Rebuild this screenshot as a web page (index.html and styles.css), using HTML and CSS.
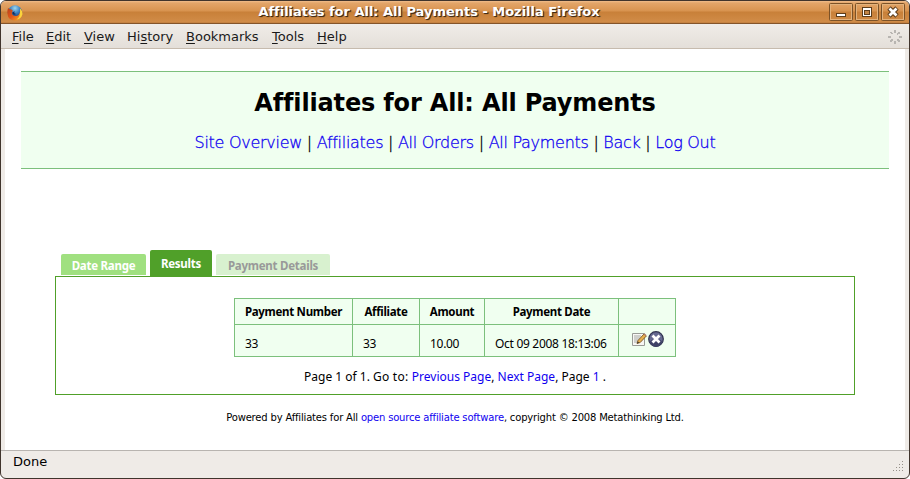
FILE: index.html
```html
<!DOCTYPE html>
<html lang="en">
<head>
<meta charset="utf-8">
<title>Affiliates for All: All Payments</title>
<link rel="stylesheet" href="styles.css">
</head>
<body>
<div class="window">
  <header class="titlebar">
    <svg class="firefox" width="16" height="16" viewBox="0 0 16 16">
      <defs>
        <radialGradient id="globe" cx=".5" cy=".2" r=".7"><stop offset="0" stop-color="#9fd8ef"/><stop offset=".5" stop-color="#3a7fc0"/><stop offset="1" stop-color="#152c60"/></radialGradient>
        <linearGradient id="fox" x1="0" y1="0" x2="1" y2="1"><stop offset="0" stop-color="#b9401a"/><stop offset=".5" stop-color="#e2581a"/><stop offset="1" stop-color="#f6b52a"/></linearGradient>
      </defs>
      <circle cx="8" cy="7.5" r="7.2" fill="url(#globe)"/>
      <path d="M1 3 L2.4 4 L4.500 4.500 L6 6 L5 7 Q4.500 10.500 8 11 Q12 11.500 13 7 L13 4 Q15.800 6 15 10 Q13.500 15.500 8 15.500 Q1 15 .5 9 Q.2 5 1 3Z" fill="url(#fox)"/>
      <path d="M13 3.500 Q15.900 6 15.400 9.500 Q14 14 9.500 14.600 Q13.800 12 13 3.500Z" fill="#fbd43c"/>
      <path d="M5.500 7 L8 6.400 L7 8 L9 9 Q7 10.500 5.500 9Z" fill="#172d57"/>
    </svg>
    <h1 class="wintitle">Affiliates for All: All Payments - Mozilla Firefox</h1>
    <div class="controls">
      <svg class="ctl" width="24" height="18" viewBox="0 0 24 18"><rect class="edge" x=".5" y=".5" width="23" height="17" rx="1"/><rect class="inner" x="1.5" y="1.5" width="21" height="15"/><rect class="mark" x="7.5" y="10.5" width="9" height="3"/></svg>
      <svg class="ctl" width="24" height="18" viewBox="0 0 24 18"><rect class="edge" x=".5" y=".5" width="23" height="17" rx="1"/><rect class="inner" x="1.5" y="1.5" width="21" height="15"/><rect class="mark" x="7.5" y="4.5" width="9" height="9"/><rect class="hole" x="9.500" y="7.500" width="5" height="4"/></svg>
      <svg class="ctl" width="24" height="18" viewBox="0 0 24 18"><rect class="edge" x=".5" y=".5" width="23" height="17" rx="1"/><rect class="inner" x="1.5" y="1.5" width="21" height="15"/><path d="M8 5 L16 13 M16 5 L8 13" stroke="#5c3d1c" stroke-width="4.800"/><path d="M8.500 5.500 L15.500 12.500 M15.500 5.500 L8.500 12.500" stroke="#fff" stroke-width="2.800"/></svg>
    </div>
  </header>
  <nav class="menubar">
    <span class="m-file"><u>F</u>ile</span><span class="m-edit"><u>E</u>dit</span><span class="m-view"><u>V</u>iew</span><span class="m-history">Hi<u>s</u>tory</span><span class="m-bookmarks"><u>B</u>ookmarks</span><span class="m-tools"><u>T</u>ools</span><span class="m-help"><u>H</u>elp</span>
    <svg class="throbber" width="14" height="14" viewBox="0 0 14 14" fill="#b8b5b1"><path d="M6 0h2v3H6zM6 11h2v3H6zM0 6h3v2H0zM11 6h3v2h-3zM2 2h2v1h1v1H3V3H2zM10 2h2v2h-2v1H9V3h1zM2 10h1V9h2v2H4v1H2zM9 9h2v1h1v2h-2v-1H9z"/></svg>
  </nav>
  <main class="page">
    <section class="banner">
      <h2 class="heading">Affiliates for All: All Payments</h2>
      <p class="links"><a>Site Overview</a> | <a>Affiliates</a> | <a>All Orders</a> | <a>All Payments</a> | <a>Back</a> | <a>Log Out</a></p>
    </section>
    <div class="tabs">
      <div class="tab range">Date Range</div>
      <div class="tab results">Results</div>
      <div class="tab details">Payment Details</div>
    </div>
    <section class="panel">
      <div class="table">
        <div class="cell head">Payment Number</div><div class="cell head">Affiliate</div><div class="cell head">Amount</div><div class="cell head">Payment Date</div><div class="cell"></div>
        <div class="cell">33</div><div class="cell">33</div><div class="cell">10.00</div><div class="cell date">Oct 09 2008 18:13:06</div>
        <div class="cell actions">
          <svg width="15" height="16" viewBox="0 0 15 16"><path d="M.5 2.500h12v12h-12z" fill="#f7f7f4" stroke="#999c96"/><path d="M2 5h7M2 7h6M2 9h5M2 11h3" stroke="#a5a7a3"/><path d="M5 12.500l1-3L12 3l2.300 2L8.200 11.500z" fill="#e6b04d" stroke="#79551f" stroke-width=".9"/><path d="M5 12.500l.8-2 1.400 1.300z" fill="#333"/><path d="M11.600 3.500l1-1 2 1.800-1 1z" fill="#b57b67"/></svg>
          <svg width="16" height="16" viewBox="0 0 16 16"><circle cx="8" cy="8" r="7.300" fill="#666a91" stroke="#30324f" stroke-width="1.200"/><path d="M2 10a6 6 0 0 0 12 0Q8 6 2 10" fill="#3f4266"/><path d="M4.500 4.500l7 7M11.500 4.500l-7 7" stroke="#fff" stroke-width="2.800"/></svg>
        </div>
      </div>
      <p class="pager">Page 1 of 1. <span class="goto">Go to: </span><a>Previous Page</a>, <a>Next Page</a>, Page <a>1</a> .</p>
    </section>
    <footer class="footer">Powered by Affiliates for All <a>open source affiliate software</a>, copyright © 2008 Metathinking Ltd.</footer>
  </main>
  <div class="status"><span>Done</span>
    <svg class="grip" width="11" height="11" viewBox="0 0 11 11"><path d="M10 1h1v1h-1zM7 4h1v1H7zM10 4h1v1h-1zM4 7h1v1H4zM7 7h1v1H7zM10 7h1v1h-1zM1 10h1v1H1zM4 10h1v1H4zM7 10h1v1H7zM10 10h1v1h-1z" fill="#96918a"/></svg>
  </div>
</div>
</body>
</html>
```
FILE: styles.css
```css
* { box-sizing: border-box; }
html { background: #fff; }
body { margin: 0; width: 910px; height: 479px; overflow: hidden; font-family: "DejaVu Sans", sans-serif; color: #000; }
h1, h2, p { margin: 0; white-space: nowrap; }
a { color: #0f00f0; }
.window { width: 910px; height: 479px; border: 1px solid #40342c; border-radius: 6px; overflow: hidden; background: #efebe7; display: flex; flex-direction: column; }
.titlebar { height: 23px; border-bottom: 1px solid #84542a; background: linear-gradient(#f0bd8b 0, #e3a569 2px, #d8934f 10px, #c88039 11px, #d18c48 21px, #b9783a 22px); display: flex; align-items: flex-start; padding: 3px 4px 0 6px; flex: none; }
.firefox { margin-top: 1px; }
.wintitle { flex: 1; text-align: center; font-size: 13px; line-height: 16px; color: #fff; text-shadow: 1px 1px 1px #3e2814, 1px 1px 0 #6a4523; letter-spacing: -.02px; padding-left: 6px; }
.controls { display: flex; gap: 2px; margin-top: -1px; }
.edge { fill: none; stroke: #7c5227; }
.inner { fill: none; stroke: #e3b27c; }
.mark { fill: #fff; stroke: #5c3d1c; }
.hole { fill: #c28445; stroke: #5c3d1c; }
.menubar { height: 25px; flex: none; display: flex; padding: 5px 7px 0 11px; font-size: 13px; line-height: 16px; background: linear-gradient(#f0ece8, #e4dfd9); border-bottom: 1px solid #c6bbae; color: #1a1a1a; }
.menubar u { text-underline-offset: 2px; text-decoration-thickness: 1px; }
.m-file { width: 34px; }
.m-edit { width: 38px; }
.m-view { width: 43px; }
.m-history { width: 59px; }
.m-bookmarks { width: 86px; }
.m-tools { width: 45px; }
.m-help { width: 40px; }
.throbber { margin: 1px 0 0 auto; }
.page { height: 401px; flex: none; margin: 0 4px; background: #fff; padding-top: 22px; }
.banner { margin: 0 16px; height: 98px; background: #f0fff0; border-top: 1px solid #7cc07c; border-bottom: 1px solid #7cc07c; text-align: center; padding-top: 15px; }
.heading { font-size: 24px; line-height: 32px; letter-spacing: -.16px; }
.links { font-size: 16px; line-height: 20px; font-weight: 200; margin-top: 14px; letter-spacing: -.28px; -webkit-text-stroke: .3px; }
.tabs { height: 27px; margin: 81px 0 0 56px; display: flex; align-items: flex-start; }
.tab { font: bold 11.5px/16px "Noto Sans", sans-serif; white-space: nowrap; border-radius: 2px 2px 0 0; text-align: center; letter-spacing: -.25px; }
.range { width: 85px; height: 21px; margin-top: 4px; padding-top: 4px; background: #a0e080; color: #fff; }
.results { width: 62px; height: 27px; margin-left: 4px; padding-top: 6px; background: #50a029; color: #fff; }
.details { width: 114px; height: 21px; margin: 4px 0 0 4px; padding-top: 4px; background: #d8f1cf; color: #999; }
.panel { width: 800px; height: 119px; margin: -1px 0 0 50px; border: 1px solid #50a029; padding-top: 21px; }
.table { width: 442px; height: 59px; margin-left: 178px; display: grid; grid-template-columns: 118px 67px 65px 134px 57px; grid-template-rows: 26px 32px; border: solid #7cc07c; border-width: 1px 0 0 1px; background: #f0fff0; font: 12px/16px "Noto Sans", sans-serif; letter-spacing: -.3px; }
.cell { border: solid #7cc07c; border-width: 0 1px 1px 0; padding: 11px 0 0 10px; white-space: nowrap; }
.head { font-weight: bold; font-size: 11.5px; text-align: center; padding: 5px 0 0; }
.actions { padding: 6px 0 0 13px; display: flex; gap: 1px; }
.pager { text-align: center; font: 12px/16px "Noto Sans", sans-serif; margin-top: 12px; }
.goto { letter-spacing: .25px; }
.footer { text-align: center; font: 10px/14px "DejaVu Sans", sans-serif; margin-top: 16px; white-space: nowrap; letter-spacing: -.18px; }
.status { flex: 1; border-top: 1px solid #b8b4b0; padding: 3px 6px 0 12px; display: flex; justify-content: space-between; font-size: 13px; line-height: 16px; }
.grip { margin-top: 6px; }
```
